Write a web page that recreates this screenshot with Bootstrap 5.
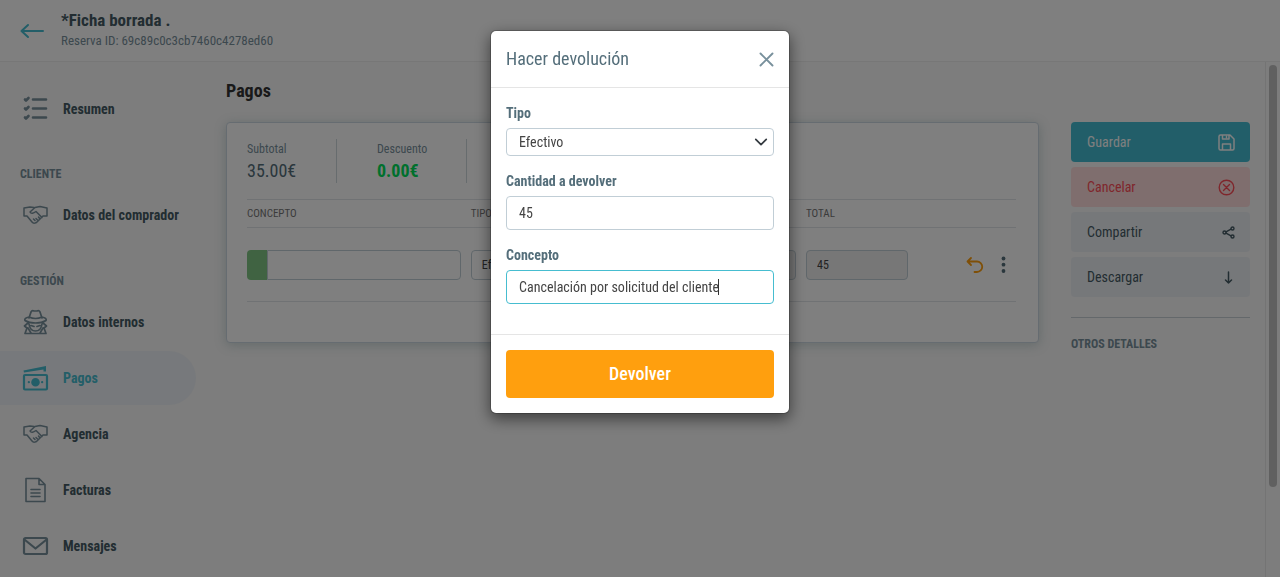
<!DOCTYPE html>
<html lang="es">
<head>
<meta charset="utf-8">
<meta name="viewport" content="width=device-width, initial-scale=1">
<title>Pagos</title>
<link href="https://cdn.jsdelivr.net/npm/bootstrap@5.3.0/dist/css/bootstrap.min.css" rel="stylesheet">
<style>
:root{--slate:#546e7a;--slate-soft:#78909c;--slate-dark:#455a64;--teal:#46bdd0;--line:#e0e4e8;--orange:#ff9f0e}
body{font-family:"Roboto Condensed","Liberation Sans Narrow",Roboto,sans-serif;font-size:14px;line-height:20px;background:#fafafa;color:#333}
svg{display:block;flex:none;fill:none;stroke:currentColor;stroke-linecap:round;stroke-linejoin:round}
.fs-12{font-size:12px}.fs-13{font-size:13px}.fs-17{font-size:17px}.fs-18{font-size:18px}
.text-slate{color:var(--slate)}.text-soft{color:var(--slate-soft)}.text-teal{color:var(--teal)}.text-deep{color:var(--slate-dark)}
.app-header{height:62px;background:#fff;border-bottom:1px solid #eee;padding-left:20px;gap:16px}
.app-body{height:calc(100vh - 62px)}
.side-menu{width:196px;padding-top:20px}
.side-title{margin:28px 0 4px 20px;font-size:12px;font-weight:700;color:var(--slate-soft)}
.side-link + .side-title ~ .side-title{margin-top:29px}
.side-link{height:54px;margin-bottom:2px;padding-left:22px;gap:14px;font-weight:700;color:var(--slate-dark);text-decoration:none;border-radius:0 27px 27px 0}
.side-link svg{color:var(--slate-soft)}
.side-link.active{background:#eff3f8;color:var(--teal)}
.side-link.active svg{color:var(--teal)}
.main-pane{padding:20px 16px 0 30px}
.main-pane h2{padding-bottom:22px;color:#333}
.pay-card{border:1px solid #cdd8e2;border-radius:4px;background:#fff;padding:16px 22px 40px 20px;box-shadow:0 2px 12px rgba(84,130,130,.3)}
.stat{width:130px}
.stat-box{width:90px;height:44px;border-right:1px solid #cfd8dc}
.stat-box .fs-18{margin-top:2px}
.total-off{color:#00e05a}
.pay-table{table-layout:fixed;border-collapse:separate;border-spacing:0;margin:16px 0 0;width:100%}
.pay-table th{font-size:11px;font-weight:400;color:#777;height:29px;padding:0;border-top:1px solid var(--line);border-bottom:1px solid var(--line);vertical-align:middle}
.pay-table td{height:74px;padding:0 10px 0 0;border-bottom:1px solid var(--line);vertical-align:middle}
.form-control,.form-select{font-size:14px;line-height:20px;border-color:#c1ced6;border-radius:4px;color:#444}
.form-control:focus{color:#444}
.pay-table .form-control,.pay-table .form-select{height:30px;padding:4px 10px;font-size:12px}
.pay-table .form-control:disabled{background:#eee}
.tag-color{width:22px;background:#81c784;border-radius:4px 0 0 4px}
.undo-btn{color:var(--orange)}
.actions{width:210px;padding:60px 15px 0 16px}
.action-btn{height:40px;margin-bottom:5px;padding:0 15px 0 16px;border-radius:4px;border:0;font-size:14px}
.btn-save,.btn-save:hover{background:#45bdd2;color:#fff}
.btn-cancel,.btn-cancel:hover{background:#ffdcdc;color:#ff4d58}
.btn-plain,.btn-plain:hover{background:#edf1f5;color:var(--slate-dark)}
.others{margin-top:20px;padding-top:16px;border-top:1px solid #c9d1d6}
.scroll-track{width:15px;border-left:1px solid #e8e8e8;padding:3px}
.scroll-thumb{height:83%;width:8px;border-radius:4px;background:#c1c1c1}
.modal-dialog{width:300px;margin:30px auto}
.modal-content{border:1px solid rgba(0,0,0,.2);border-radius:6px;background-clip:padding-box;box-shadow:0 5px 15px rgba(0,0,0,.5)}
.modal-header{height:57px;padding:0 15px;border-color:#e5e5e5}
.modal-title{line-height:20px}
.modal-body{padding:15px}
.modal-footer{padding:15px;border-color:#e5e5e5}
.modal-footer>*{margin:0}
.field{margin-bottom:15px}
.form-label{display:block;margin-bottom:5px;font-weight:700;color:var(--slate)}
.field .form-control{height:34px;padding:6px 12px}
.field .form-select{height:28px;padding:3px 32px 3px 12px;background-position:right 5px center;background-size:14px 14px}
.field .form-control:focus{border-color:var(--teal);box-shadow:none}
.field .is-current{border-color:var(--teal);caret-color:transparent}
.text-cursor{position:absolute;left:212px;top:9px;width:1px;height:16px;background:#333}
.btn-refund,.btn-refund:hover{height:48px;padding:0 12px 2px;background:var(--orange);color:#fff;font-size:18px;font-weight:500;border:0;border-radius:4px}
</style>
</head>
<body class="overflow-hidden">

<header class="app-header d-flex align-items-center">
  <a href="#" class="text-teal" aria-label="Volver"><svg width="25" height="16" viewBox="0 0 25 16" stroke-width="2"><path d="M23 8H1.500M8 2 1.500 8 8 14"/></svg></a>
  <div>
    <h1 class="fs-17 fw-bold text-deep m-0 lh-sm">*Ficha borrada .</h1>
    <div class="fs-13 text-soft">Reserva ID: 69c89c0c3cb7460c4278ed60</div>
  </div>
</header>

<div class="app-body d-flex">
  <nav class="side-menu flex-shrink-0">
    <a href="#" class="side-link d-flex align-items-center"><svg width="27" height="26" viewBox="0 0 27 26" stroke-width="2.600"><path d="M11 3.500H24M11 12.500H24M11 21.500H24M3 3.500 4 4.500 6.500 2M3 12.500 4 13.500 6.500 11M3 21.500 4 22.500 6.500 20"/></svg>Resumen</a>
    <div class="side-title">CLIENTE</div>
    <a href="#" class="side-link d-flex align-items-center"><svg width="27" height="20" viewBox="0 0 27 20" stroke-width="1.500"><path d="M2 3 8 2 12 2.500M25 3 18 1.500 13 2.500 8 7C9 9 11.500 8.500 14 6.500L20 12.500M2 3V11H5L10 17C11.500 19 14 18 15 17L21 11H25V3M11.500 14 13 15.500M14 13.500 16 15.500M16.500 12 18 14"/></svg>Datos del comprador</a>
    <div class="side-title">GESTIÓN</div>
    <a href="#" class="side-link d-flex align-items-center"><svg width="27" height="26" viewBox="0 0 27 26" stroke-width="1.700"><path d="M7 9 9 3Q10 1 12 2H15Q17 1 18 3L20 9M7 8Q13.500 11 20 8M7 8Q2 9 3 11.500 7 14 13.500 14T24 11.500Q25 9 20 8M6 14 2.500 17 5 19 3 24.500H24L22 19 24.500 17 21 14M7 15Q8 22 13.500 22T20 15M9 16.500 12 17.500M18 16.500 15 17.500M6 19 9 24M21 19 18 24"/></svg>Datos internos</a>
    <a href="#" class="side-link active d-flex align-items-center" aria-current="page"><svg width="27" height="26" viewBox="0 0 27 26" stroke-width="2.200"><rect x="2" y="10" width="23" height="14.500" rx="1"/><circle cx="13.500" cy="17.200" r="3.200" fill="currentColor"/><path d="M6.800 17.200h.1M20.100 17.200h.1"/><path d="M1.500 5.500 24 1V6.500H21.500V4.500L2 7.500Z" fill="currentColor" stroke="none"/></svg>Pagos</a>
    <a href="#" class="side-link d-flex align-items-center"><svg width="27" height="20" viewBox="0 0 27 20" stroke-width="1.500"><path d="M2 3 8 2 12 2.500M25 3 18 1.500 13 2.500 8 7C9 9 11.500 8.500 14 6.500L20 12.500M2 3V11H5L10 17C11.500 19 14 18 15 17L21 11H25V3M11.500 14 13 15.500M14 13.500 16 15.500M16.500 12 18 14"/></svg>Agencia</a>
    <a href="#" class="side-link d-flex align-items-center"><svg width="27" height="26" viewBox="0 0 27 26" stroke-width="1.600"><path d="M4 1.500H17L23 7.500V24.500H4ZM17 1.500V7.500H23M9 12.500H18M9 16H18M9 19.500H18"/></svg>Facturas</a>
    <a href="#" class="side-link d-flex align-items-center"><svg width="27" height="20" viewBox="0 0 27 20" stroke-width="2.200"><rect x="2" y="2" width="23" height="16" rx="1.500"/><path d="M3 4 13.500 12.500 24 4"/></svg>Mensajes</a>
  </nav>

  <main class="main-pane flex-grow-1">
    <h2 class="fs-18 fw-bold lh-1 mb-0">Pagos</h2>
    <section class="pay-card">
      <div class="d-flex">
        <div class="stat"><div class="stat-box"><div class="fs-12 text-soft">Subtotal</div><div class="fs-18 text-slate">35.00€</div></div></div>
        <div class="stat"><div class="stat-box"><div class="fs-12 text-soft">Descuento</div><div class="fs-18 fw-bold total-off">0.00€</div></div></div>
      </div>
      <table class="pay-table">
        <colgroup><col style="width:29.1%"><col style="width:14.5%"><col style="width:29.1%"><col style="width:14.5%"><col></colgroup>
        <thead><tr><th>CONCEPTO</th><th>TIPO</th><th></th><th>TOTAL</th><th></th></tr></thead>
        <tbody><tr>
          <td><div class="d-flex"><span class="tag-color"></span><input class="form-control rounded-start-0" type="text" aria-label="Concepto del pago"></div></td>
          <td><select class="form-select" aria-label="Tipo de pago"><option>Efectivo</option></select></td>
          <td><input class="form-control" type="text" disabled aria-label="Importe"></td>
          <td><input class="form-control" type="text" value="45" disabled aria-label="Total"></td>
          <td><div class="d-flex justify-content-end align-items-center gap-3">
            <button type="button" class="btn p-0 border-0 undo-btn" aria-label="Devolver pago"><svg width="19" height="18" viewBox="0 0 19 18" stroke-width="1.800"><path d="M5 2 1.500 5.500 5 9M1.500 5.500H11A5 5 0 0 1 11 16H8.500"/></svg></button>
            <button type="button" class="btn p-0 border-0 text-slate" aria-label="Más opciones"><svg width="5" height="18" viewBox="0 0 5 18" stroke="none"><g fill="currentColor" stroke="none"><circle cx="2.500" cy="2.500" r="1.900"/><circle cx="2.500" cy="8.700" r="1.900"/><circle cx="2.500" cy="15" r="1.900"/></g></svg></button>
          </div></td>
        </tr></tbody>
      </table>
    </section>
  </main>

  <aside class="actions flex-shrink-0">
    <button type="button" class="btn btn-save action-btn w-100 d-flex justify-content-between align-items-center">Guardar<svg width="17" height="17" viewBox="0 0 17 17" stroke-width="1.500"><path d="M1 2.500Q1 1 2.500 1H12L16 5V14.500Q16 16 14.500 16H2.500Q1 16 1 14.500ZM4.500 1V5H11V1M4.500 16V10H12.500V16M8.500 2.500V3.500"/></svg></button>
    <button type="button" class="btn btn-cancel action-btn w-100 d-flex justify-content-between align-items-center">Cancelar<svg width="17" height="17" viewBox="0 0 17 17" stroke-width="1.400"><circle cx="8.500" cy="8.500" r="7.300"/><path d="M5.500 5.500 11.500 11.500M11.500 5.500 5.500 11.500"/></svg></button>
    <button type="button" class="btn btn-plain action-btn w-100 d-flex justify-content-between align-items-center">Compartir<svg width="13" height="13" viewBox="0 0 13 13" stroke-width="1.400"><circle cx="2.500" cy="6.500" r="1.500"/><circle cx="10.500" cy="2.500" r="1.500"/><circle cx="10.500" cy="10.500" r="1.500"/><path d="M4 5.800 9 3.200M4 7.200 9 9.800"/></svg></button>
    <button type="button" class="btn btn-plain action-btn w-100 d-flex justify-content-between align-items-center">Descargar<svg width="13" height="13" viewBox="0 0 13 13" stroke-width="1.500"><path d="M6.500 1V12M3.500 9 6.500 12 9.500 9"/></svg></button>
    <div class="others fs-12 fw-bold text-soft">OTROS DETALLES</div>
  </aside>
  <div class="scroll-track flex-shrink-0" aria-hidden="true"><div class="scroll-thumb"></div></div>
</div>

<div class="modal-backdrop show"></div>
<div class="modal show d-block" role="dialog" aria-modal="true" aria-labelledby="refundTitle">
  <div class="modal-dialog">
    <form class="modal-content">
      <div class="modal-header">
        <h2 class="modal-title fs-18 fw-normal text-slate" id="refundTitle">Hacer devolución</h2>
        <button type="button" class="btn p-0 border-0 text-soft" aria-label="Cerrar"><svg width="15" height="15" viewBox="0 0 15 15" stroke-width="1.900"><path d="M1.500 1.500 13.500 13.500M13.500 1.500 1.500 13.500"/></svg></button>
      </div>
      <div class="modal-body">
        <div class="field"><label class="form-label" for="tipo">Tipo</label><select class="form-select" id="tipo"><option>Efectivo</option></select></div>
        <div class="field"><label class="form-label" for="cantidad">Cantidad a devolver</label><input class="form-control" id="cantidad" type="text" value="45"></div>
        <div class="field"><label class="form-label" for="concepto">Concepto</label><div class="position-relative"><input class="form-control is-current" id="concepto" type="text" value="Cancelación por solicitud del cliente"><span class="text-cursor" aria-hidden="true"></span></div></div>
      </div>
      <div class="modal-footer"><button type="submit" class="btn btn-refund w-100">Devolver</button></div>
    </form>
  </div>
</div>

<script src="https://cdn.jsdelivr.net/npm/bootstrap@5.3.0/dist/js/bootstrap.bundle.min.js"></script>
</body>
</html>
